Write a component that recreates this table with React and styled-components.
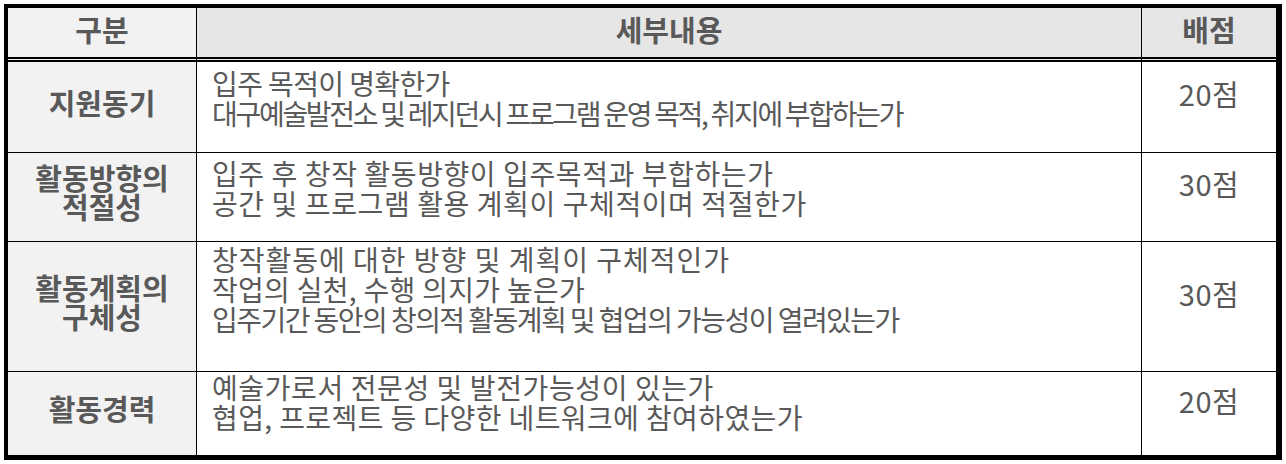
import styled, { createGlobalStyle } from 'styled-components';

const GlobalStyle = createGlobalStyle`
  html, body {
    margin: 0;
    padding: 0;
    background: #ffffff;
  }
  body {
    font-family: "Noto Sans CJK KR", "Noto Sans", sans-serif;
    color: #595959;
  }
`;

// spacing: per-line letter-spacing (px), the source squeezes some lines to fit
const ROWS = [
  {
    label: ['지원동기'],
    lines: [
      { text: '입주 목적이 명확한가', spacing: -0.6 },
      {
        text: '대구예술발전소 및 레지던시 프로그램 운영 목적, 취지에 부합하는가',
        spacing: -2.3,
      },
    ],
    score: '20점',
    height: 90,
    top: 6,
  },
  {
    label: ['활동방향의', '적절성'],
    lines: [
      { text: '입주 후 창작 활동방향이 입주목적과 부합하는가', spacing: 0.6 },
      { text: '공간 및 프로그램 활용 계획이 구체적이며 적절한가', spacing: 0.6 },
    ],
    score: '30점',
    height: 88,
    top: 5,
  },
  {
    label: ['활동계획의', '구체성'],
    lines: [
      { text: '창작활동에 대한 방향 및 계획이 구체적인가', spacing: 1 },
      { text: '작업의 실천, 수행 의지가 높은가', spacing: 0.3 },
      {
        text: '입주기간 동안의 창의적 활동계획 및 협업의 가능성이 열려있는가',
        spacing: -1.55,
      },
    ],
    score: '30점',
    height: 129,
    top: 2,
  },
  {
    label: ['활동경력'],
    lines: [
      { text: '예술가로서 전문성 및 발전가능성이 있는가', spacing: 0.6 },
      { text: '협업, 프로젝트 등 다양한 네트워크에 참여하였는가', spacing: 0.4 },
    ],
    score: '20점',
    height: 83,
    top: 0,
  },
];

const Page = styled.div`
  padding: 4px;
`;

const Table = styled.div`
  display: grid;
  grid-template-columns: 189px 1fr 134px;
  width: 1278px;
  box-sizing: border-box;
  border-style: solid;
  border-color: #000;
  border-width: 4px 6px 5px 4px;
`;

const Cell = styled.div`
  box-sizing: border-box;
  display: flex;
  align-items: center;
  justify-content: center;
  border-right: ${({ $last }) => ($last ? '0' : '1px solid #000')};
  border-bottom: ${({ $edge }) =>
    $edge === 'head' ? '5px double #000' : $edge === 'end' ? '0' : '1px solid #000'};
`;

const HeadCell = styled(Cell)`
  height: 54px;
  padding-bottom: 7px;
  background: ${({ $light }) => ($light ? '#f2f2f2' : '#e6e6e6')};
  font-size: 29px;
  font-weight: 700;
`;

const LabelCell = styled(Cell)`
  flex-direction: column;
  background: #f2f2f2;
  padding-bottom: 10px;
  font-size: 29px;
  font-weight: 700;
  line-height: 29px;
  text-align: center;
`;

const DetailCell = styled(Cell)`
  flex-direction: column;
  align-items: flex-start;
  justify-content: flex-start;
  padding: ${({ $top }) => $top}px 0 0 15px;
`;

const Line = styled.div`
  font-size: 28px;
  line-height: 30px;
  white-space: nowrap;
  letter-spacing: ${({ $spacing }) => $spacing}px;
`;

const ScoreCell = styled(Cell)`
  padding-bottom: 28px;
  font-size: 29px;
  letter-spacing: 0.5px;
`;

export default function App() {
  return (
    <Page>
      <GlobalStyle />
      <Table>
        <HeadCell $edge="head" $light>
          구분
        </HeadCell>
        <HeadCell $edge="head">세부내용</HeadCell>
        <HeadCell $edge="head" $last>
          배점
        </HeadCell>
        {ROWS.map((row, i) => {
          const edge = i === ROWS.length - 1 ? 'end' : 'row';
          const h = row.height + (edge === 'end' ? 0 : 1);
          return [
            <LabelCell key={`l${i}`} $edge={edge} style={{ height: h }}>
              {row.label.map((t) => (
                <span key={t}>{t}</span>
              ))}
            </LabelCell>,
            <DetailCell key={`d${i}`} $edge={edge} $top={row.top} style={{ height: h }}>
              {row.lines.map((line) => (
                <Line key={line.text} $spacing={line.spacing}>
                  {line.text}
                </Line>
              ))}
            </DetailCell>,
            <ScoreCell key={`s${i}`} $edge={edge} $last style={{ height: h }}>
              {row.score}
            </ScoreCell>,
          ];
        })}
      </Table>
    </Page>
  );
}
